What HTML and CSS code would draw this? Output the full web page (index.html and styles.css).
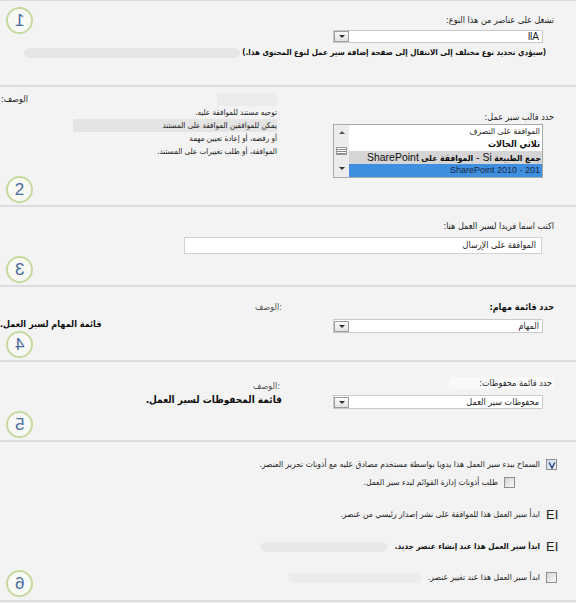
FILE: index.html
```html
<!DOCTYPE html>
<html lang="ar" dir="rtl">
<head>
<meta charset="utf-8">
<title>إضافة سير عمل</title>
<link rel="stylesheet" href="styles.css">
</head>
<body>
<main class="page">
  <section class="sec s1">
    <span class="badge"><span class="flip">1</span></span>
    <div class="ctl">
      <div class="lbl">تشغل على عناصر من هذا النوع:</div>
      <div class="select first"><span class="val en" dir="ltr">llA</span><span class="btn"><i class="tri-d"></i></span></div>
    </div>
    <div class="note"><b>(سيؤدي تحديد نوع مختلف إلى الانتقال إلى صفحة إضافة سير عمل لنوع المحتوى هذا.)</b><span class="smudge"></span></div>
  </section>

  <section class="sec s2 grid">
    <div class="ctl pad18">
      <div class="lbl">حدد قالب سير عمل:</div>
      <div class="listbox">
        <div class="rows">
          <div class="opt">الموافقة على التصرف</div>
          <div class="opt b">ثلاثي الحالات</div>
          <div class="opt gray"><b>جمع الطبيعة</b> <span class="en">Si - </span><b>الموافقة على</b> <span class="en">SharePoint</span></div>
          <div class="opt sel"><span class="en" dir="ltr">SharePoint 2010 - 201</span></div>
        </div>
        <div class="scroll"><i class="tri-u"></i><i class="grip"></i><i class="tri-d"></i></div>
      </div>
    </div>
    <div class="desc d2">
      <div class="dhead"><span class="faint"></span><span class="dl">الوصف:</span></div>
      <p class="dline">توجيه مستند للموافقة عليه.</p>
      <p class="dline hl">يمكن للموافقين الموافقة على المستند</p>
      <p class="dline">أو رفضه، أو إعادة تعيين مهمة</p>
      <p class="dline">الموافقة، أو طلب تغييرات على المستند.</p>
    </div>
    <span class="badge"><span>2</span></span>
  </section>

  <section class="sec s3">
    <div class="lbl">اكتب اسما فريدا لسير العمل هنا:</div>
    <div class="textbox">الموافقة على الإرسال</div>
    <span class="badge"><span class="flip">3</span></span>
  </section>

  <section class="sec s4 grid">
    <div class="ctl">
      <div class="lbl"><b>حدد قائمة مهام:</b></div>
      <div class="select sel5"><span class="val">المهام</span><span class="btn"><i class="tri-d"></i></span></div>
    </div>
    <div class="desc">
      <div class="dl gray-t">:الوصف</div>
      <div class="dl left"><b>قائمة المهام لسير العمل.</b></div>
    </div>
    <span class="badge"><span class="flip">4</span></span>
  </section>

  <section class="sec s5 grid">
    <div class="ctl">
      <div class="lbl"><span class="lblbox">حدد قائمة محفوظات:</span></div>
      <div class="select sel5"><span class="val">محفوظات سير العمل</span><span class="btn"><i class="tri-d"></i></span></div>
    </div>
    <div class="desc d5">
      <div class="dl gray-t ind2">:الوصف</div>
      <div class="dl big"><b>قائمة المحفوظات لسير العمل.</b></div>
    </div>
    <span class="badge"><span class="flip">5</span></span>
  </section>

  <section class="sec s6">
    <div class="row">
      <span class="cb on"><svg width="8" height="8" viewBox="0 0 8 8"><polyline points="1.2,1.5 4,7 6.8,1.5" fill="none" stroke="#2f4f8f" stroke-width="1.6"/></svg></span>
      <span>السماح ببدء سير العمل هذا يدويا بواسطة مستخدم مصادق عليه مع أذونات تحرير العنصر.</span>
    </div>
    <div class="row sub">
      <span class="cb"></span>
      <span>طلب أذونات إدارة القوائم لبدء سير العمل.</span>
    </div>
    <div class="row gap1">
      <span class="ei" dir="ltr">EI</span>
      <span>ابدأ سير العمل هذا للموافقة على نشر إصدار رئيسي من عنصر.</span>
    </div>
    <div class="row gap1">
      <span class="ei" dir="ltr">EI</span>
      <b class="bt">ابدأ سير العمل هذا عند إنشاء عنصر جديد.</b>
      <span class="smudge s-row4"></span>
    </div>
    <div class="row gap2">
      <span class="cb"></span>
      <span>ابدأ سير العمل هذا عند تغيير عنصر.</span>
      <span class="smudge s-row5"></span>
    </div>
    <span class="badge b6"><span class="flip">6</span></span>
  </section>
</main>
</body>
</html>
```

FILE: styles.css
```css
* { box-sizing: border-box; margin: 0; padding: 0; }
html { background: #f3f3f3; }
body {
  margin: 0;
  width: 576px;
  height: 603px;
  overflow: hidden;
  background: #f3f3f3;
  font-family: "DejaVu Sans Condensed", "DejaVu Sans", sans-serif;
  font-size: 8.5px;
  line-height: 13px;
  color: #1f1f1f;
}
b { color: #0f0f0f; }
.en { font-family: "Liberation Sans", sans-serif; }
.page { border-top: 1px solid #dcdcdc; }
.sec { position: relative; border-bottom: 2px solid #dddddd; }
.grid { display: grid; grid-template-columns: 221px 1fr; column-gap: 51px; align-items: start; }

.s1 { height: 86px; padding: 13px 22px 0 0; }
.s2 { height: 120px; padding: 6px 22px 0 0; column-gap: 56px; }
.s3 { height: 80px; padding: 13px 22px 0 0; }
.s4 { height: 75px; padding: 14px 22px 0 0; }
.s5 { height: 80px; padding: 15px 22px 0 0; }
.s6 { height: 160px; padding: 16px 19px 0 0; }

.ctl { width: 221px; }
.pad18 { padding-top: 18px; }
.lbl { height: 13px; white-space: nowrap; font-size: 9px; }
.lblbox { background: #f9f9f9; padding: 1px 2px 1px 30px; }

.select {
  margin: 5px 11px 0 0;
  width: 210px;
  height: 14px;
  background: #fff;
  border: 1px solid #c9c9c9;
  display: flex;
  justify-content: space-between;
  align-items: center;
}
.select.first { margin-top: 3px; height: 13px; }
.val { padding-right: 3px; white-space: nowrap; font-size: 9px; }
.val.en { font-size: 10px; }
.btn {
  width: 15px;
  height: 11px;
  border: 1px solid #9d9d9d;
  background: linear-gradient(#fbfbfb, #e2e2e2);
  display: flex;
  align-items: center;
  justify-content: center;
}
.tri-d, .tri-u {
  display: block;
  width: 0; height: 0;
  border-left: 3px solid transparent;
  border-right: 3px solid transparent;
}
.tri-d { border-top: 3px solid #333; }
.tri-u { border-bottom: 3px solid #555; }

.note {
  margin: 3px 8px 0 0;
  padding-left: 24px;
  display: flex;
  align-items: center;
  white-space: nowrap;
  font-size: 8px;
}
.smudge { display: block; height: 10px; background: #e6e6e6; border-radius: 5px; }
.note .smudge { flex: 1; margin-right: 2px; }

.listbox {
  margin-right: 11px;
  width: 210px;
  height: 54px;
  background: #fff;
  border: 1px solid #aaaaaa;
  display: flex;
}
.rows { flex: 1; overflow: hidden; }
.opt { height: 13px; line-height: 13px; padding-right: 2px; white-space: nowrap; overflow: hidden; }
.opt.b { font-weight: bold; font-size: 9px; color: #111; }
.opt.gray { height: 13px; background: #d5d5d5; padding-right: 1px; color: #111; }
.opt.gray b { font-size: 8.5px; }
.opt.gray .en { font-size: 10.5px; }
.opt.sel { height: 13px; background: #3f8fe0; color: #1a2740; padding-right: 2px; }
.opt.sel .en { font-size: 9px; }
.scroll {
  width: 15px;
  background: #ececec;
  display: flex;
  flex-direction: column;
  justify-content: space-between;
  align-items: center;
  padding: 6px 0 7px;
}
.grip {
  display: block;
  width: 11px;
  height: 8px;
  border: 1px solid #9a9a9a;
  background: repeating-linear-gradient(#fff 0 1px, #8a8a8a 1px 2px);
}

.desc { white-space: nowrap; }
.dhead { display: flex; justify-content: space-between; align-items: center; }
.dhead .dl { font-size: 9px; padding-left: 1px; }
.faint { display: block; width: 60px; height: 13px; background: #ebebeb; }
.dline { text-align: right; color: #222; font-size: 8px; }
.dline.hl { background: #e4e4e4; margin-left: 73px; border-radius: 2px; }
.gray-t { color: #555; font-size: 9px; }
.dl.left { text-align: left; margin-top: 4px; font-size: 9px; }
.dl.big { font-size: 10px; }
.ind2 { padding-right: 2px; }
.d5 { padding-top: 3px; }

.textbox {
  margin: 4px 12px 0 0;
  width: 358px;
  height: 17px;
  background: #fff;
  border: 1px solid #d2d2d2;
  padding-right: 5px;
  line-height: 15px;
  font-size: 9px;
}

.row { display: flex; align-items: center; gap: 6px; height: 13px; white-space: nowrap; }
.row.sub { margin-top: 5px; padding-right: 42px; }
.row.gap1 { margin-top: 19px; }
.row.gap2 { margin-top: 18px; }
.bt { font-size: 8px; }
.cb {
  width: 11px;
  height: 11px;
  border: 1px solid #8f8f8f;
  background: linear-gradient(135deg, #d6d6d6, #f8f8f8);
  display: flex;
  align-items: center;
  justify-content: center;
}
.cb.on { background: linear-gradient(135deg, #cfd7e6, #f4f6fa); }
.ei { font-family: "Liberation Sans", sans-serif; font-size: 13px; color: #222; width: 11px; }
.s-row4 { width: 126px; margin-right: 2px; background: #e8e8e8; }
.s-row5 { width: 134px; margin-right: 0; background: #ececec; }

.badge {
  position: absolute;
  left: 6px;
  bottom: 2px;
  width: 27px;
  height: 27px;
  border-radius: 50%;
  border: 2px solid #c6d99e;
  background: #f8f8f5;
  display: flex;
  align-items: center;
  justify-content: center;
  color: #4a6c9f;
  font-family: "Liberation Sans", sans-serif;
  font-size: 17px;
  line-height: 1;
}
.s1 .badge { top: 6px; bottom: auto; }
.b6 { bottom: 3px; }
.flip { display: inline-block; transform: scaleX(-1); }
```
